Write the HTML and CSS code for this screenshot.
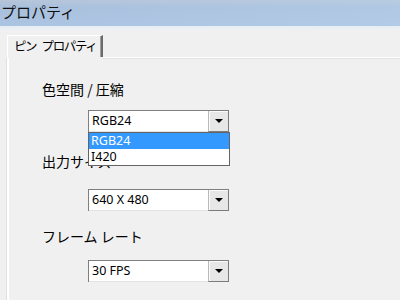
FILE: index.html
```html
<!DOCTYPE html>
<html lang="ja">
<head>
<meta charset="utf-8">
<link rel="stylesheet" href="styles.css">
</head>
<body>
<div class="titlebar">プロパティ</div>
<div class="strip"></div>
<div class="tabs">
  <div class="tab">ピン プロパティ</div>
  <div class="fill"></div>
</div>
<div class="panel">
  <div class="label l1">色空間 / 圧縮</div>
  <div class="combo c1">
    <div class="field">RGB24</div>
    <div class="btn"><span class="arrow"></span></div>
    <div class="list">
      <div class="item sel">RGB24</div>
      <div class="item">I420</div>
    </div>
  </div>
  <div class="label l2">出力サイズ</div>
  <div class="combo c2">
    <div class="field">640 X 480</div>
    <div class="btn"><span class="arrow"></span></div>
  </div>
  <div class="label l3">フレーム レート</div>
  <div class="combo c3">
    <div class="field">30 FPS</div>
    <div class="btn"><span class="arrow"></span></div>
  </div>
</div>
</body>
</html>
```

FILE: styles.css
```css
html, body {
  margin: 0;
  padding: 0;
  background: #f0f0f0;
  width: 400px;
  height: 300px;
  overflow: hidden;
  font-family: "Noto Sans CJK JP", "Noto Sans", sans-serif;
  color: #000;
}

.titlebar {
  height: 26px;
  line-height: 24px;
  padding-left: 1px;
  font-size: 15px;
  color: #111;
  background:
    linear-gradient(90deg, rgba(255,255,255,0) 0%, rgba(190,215,240,0.35) 100%),
    linear-gradient(180deg, #b6c5d8 0px, #a9c0dd 7px, #abc4e1 26px);
}

.strip {
  height: 4px;
  background: linear-gradient(180deg, #e6edf5, #eef1f4);
}

.tabs {
  display: flex;
  margin-top: 5px;
  height: 23px;
}

.tab {
  margin-left: 7px;
  width: 96px;
  height: 22px;
  box-sizing: border-box;
  border-top: 1px solid #fff;
  border-left: 1px solid #fff;
  border-right: 2px solid #6b6b6b;
  box-shadow: inset -1px 0 0 #a0a0a0;
  padding-left: 6px;
  font-size: 12.5px;
  letter-spacing: -1.4px;
  word-spacing: 4px;
  line-height: 20px;
  white-space: nowrap;
}

.fill {
  flex: 1;
  height: 22px;
  border-bottom: 1px solid #fff;
  box-shadow: 0 1px 0 #e2e2e2;
}

.panel {
  margin-left: 7px;
  height: 250px;
  border-left: 2px solid #fff;
  box-shadow: -1px 0 0 #e0e0e0;
  padding-left: 33px;
  display: flex;
  flex-direction: column;
  align-items: flex-start;
}

.label {
  font-size: 14px;
  line-height: 20px;
  height: 20px;
  white-space: nowrap;
}

.l1 { margin-top: 21px; }
.l2 { margin-top: 19px; }
.l3 { margin-top: 15px; }

.combo {
  position: relative;
  margin-left: 46px;
  width: 141px;
  height: 22px;
  box-sizing: border-box;
  display: flex;
  border-top: 1px solid #7f7f7f;
  border-left: 1px solid #7f7f7f;
  font-family: "Noto Sans", sans-serif;
  font-size: 12.5px;
}

.c1 { margin-top: 11px; }
.c2 { margin-top: 18px; }
.c3 { margin-top: 14px; }

.field {
  flex: 1;
  background: #fff;
  border-bottom: 1px solid #e3e3e3;
  padding-left: 3px;
  line-height: 20px;
  white-space: nowrap;
}

.btn {
  width: 21px;
  box-sizing: border-box;
  background: #e7e7e7;
  border-left: 1px solid #b9b9b9;
  border-right: 1px solid #7c7c7c;
  border-bottom: 1px solid #7c7c7c;
  box-shadow: inset 1px 1px 0 #fbfbfb;
  display: flex;
  align-items: center;
  justify-content: center;
}

.arrow {
  width: 0;
  height: 0;
  border-left: 4px solid transparent;
  border-right: 4px solid transparent;
  border-top: 4px solid #000;
  margin-left: 1px;
}

.list {
  position: absolute;
  left: -1px;
  top: 21px;
  width: 142px;
  box-sizing: border-box;
  border: 1px solid #646464;
  background: #fff;
}

.item {
  height: 16px;
  line-height: 16px;
  padding-left: 2px;
}

.item.sel {
  background: #3399ff;
  color: #fff;
}
```
